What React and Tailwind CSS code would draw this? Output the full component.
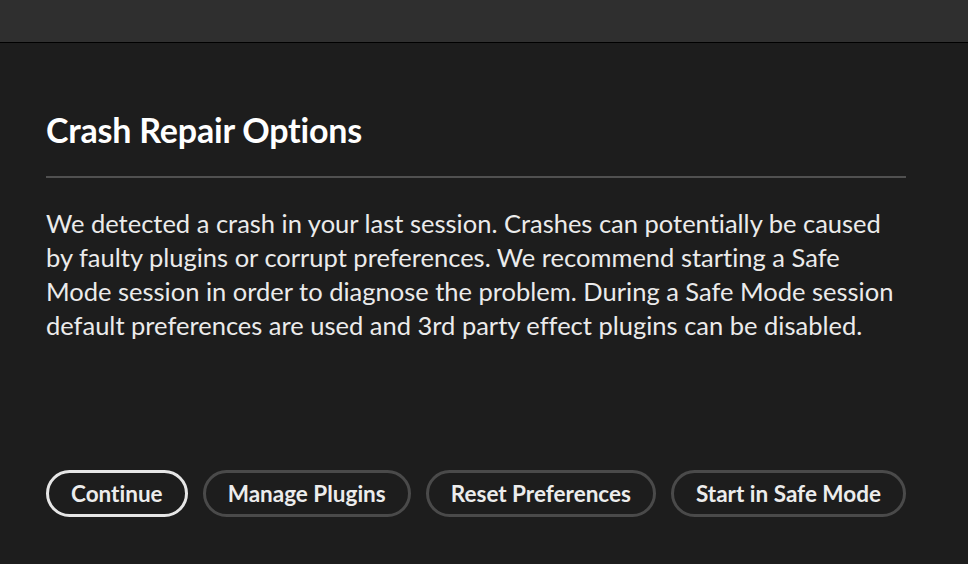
import React from 'react';

const buttons = [
  { label: 'Continue', primary: true },
  { label: 'Manage Plugins' },
  { label: 'Reset Preferences' },
  { label: 'Start in Safe Mode' },
];

const App = () => {
  return (
    <div className="w-[968px] h-[564px] bg-[#1d1d1d] flex flex-col overflow-hidden [font-variant-ligatures:none]" style={{ fontFamily: 'Lato, "Open Sans", sans-serif' }}>
      {/* title bar */}
      <div className="h-[43px] shrink-0 bg-[#2f2f2f] border-b border-black" />

      <div className="w-[860px] ml-[46px] flex flex-col flex-1">
        <h1 className="mt-[67px] text-[34px] leading-[40px] font-bold text-white tracking-[-0.2px]">
          Crash Repair Options
        </h1>
        <div className="mt-[26px] h-[2px] bg-[#505050]" />

        <p className="mt-[28px] text-[25.5px] leading-[34px] text-[#ebebeb]">
          We detected a crash in your last session. Crashes can potentially be caused by faulty plugins or corrupt preferences. We recommend starting a Safe Mode session in order to diagnose the problem. During a Safe Mode session default preferences are used and 3rd party effect plugins can be disabled.
        </p>

        <div className="mt-auto mb-[47px] flex justify-between">
          {buttons.map(b => (
            <button
              key={b.label}
              className={`shrink-0 whitespace-nowrap h-[47px] px-[22px] rounded-full border-[3px] text-[22.5px] font-bold text-[#ececec] ${b.primary ? 'border-[#e6e6e6]' : 'border-[#4a4a4a]'}`}
            >
              {b.label}
            </button>
          ))}
        </div>
      </div>
    </div>
  );
};

export default App;
